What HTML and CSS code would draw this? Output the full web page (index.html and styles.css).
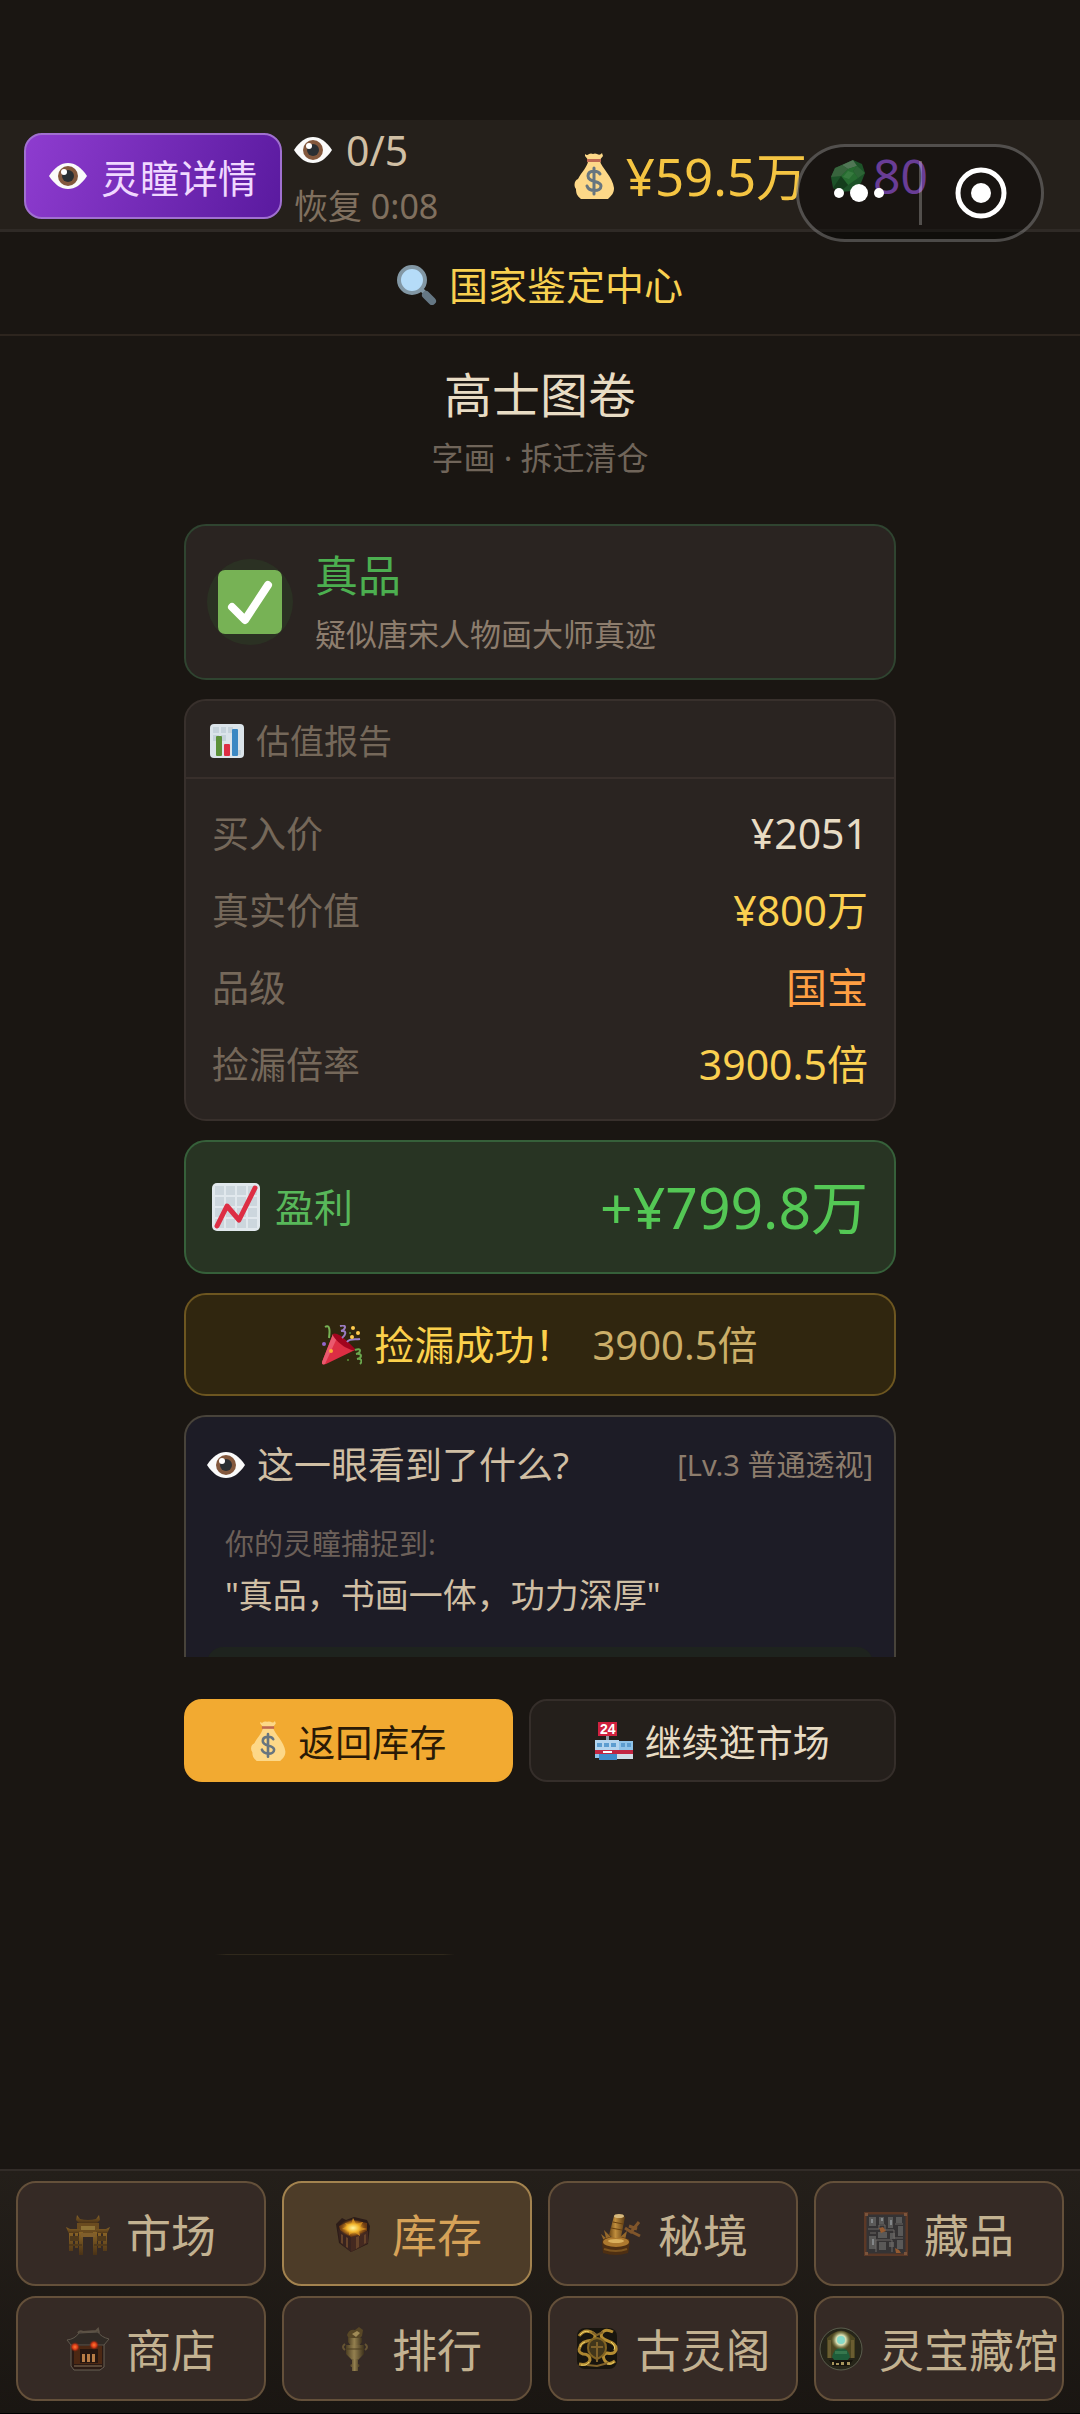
FILE: index.html
```html
<!doctype html>
<html lang="zh-CN">
    <head>
        <meta charset="UTF-8" />
        <meta name="viewport" content="width=device-width, initial-scale=1.0" />
        <title>国家鉴定中心</title>
        <link rel="stylesheet" href="styles.css">
    </head>
    <body>
        <!-- icon sprite -->
        <svg class="sprite" aria-hidden="true">
            <defs>
                <linearGradient id="gold" x1="0" y1="0" x2="0" y2="1">
                    <stop offset="0" stop-color="#8a6426" />
                    <stop offset="1" stop-color="#4a3216" />
                </linearGradient>
                <linearGradient id="bronze" x1="0" y1="0" x2="1" y2="0">
                    <stop offset="0" stop-color="#4c3e22" />
                    <stop offset="0.45" stop-color="#94804f" />
                    <stop offset="1" stop-color="#3f331d" />
                </linearGradient>
                <linearGradient id="brass" x1="0" y1="0" x2="1" y2="0">
                    <stop offset="0" stop-color="#6b4513" />
                    <stop offset="0.4" stop-color="#c08e3d" />
                    <stop offset="1" stop-color="#5c3a12" />
                </linearGradient>
                <radialGradient id="glow">
                    <stop offset="0" stop-color="#fff6a0" />
                    <stop offset="0.45" stop-color="#f3b52c" />
                    <stop offset="1" stop-color="#8a4a12" stop-opacity="0" />
                </radialGradient>
                <radialGradient id="lamp">
                    <stop offset="0" stop-color="#ff7a35" />
                    <stop offset="0.5" stop-color="#d83a16" />
                    <stop offset="1" stop-color="#7a1a08" stop-opacity="0" />
                </radialGradient>
                <radialGradient id="orb">
                    <stop offset="0" stop-color="#8fe6cf" />
                    <stop offset="0.5" stop-color="#d9dfb4" />
                    <stop offset="1" stop-color="#8c8748" stop-opacity="0" />
                </radialGradient>
            </defs>

            <symbol id="i-eye" viewBox="0 0 38 26">
                <path d="M0 13C6 4 12 0 19 0s13 4 19 13c-6 9-12 13-19 13S6 22 0 13z" fill="#fafafa" />
                <circle cx="19" cy="13" r="10" fill="#83583d" />
                <circle cx="19" cy="13" r="6" fill="#2a2f33" />
                <circle cx="15" cy="9" r="3" fill="#fff" />
            </symbol>

            <symbol id="i-search" viewBox="0 0 40 40">
                <path d="M25 25l4 4" stroke="#8196a3" stroke-width="4" />
                <path d="M29 30l6 6" stroke="#657784" stroke-width="8" stroke-linecap="round" />
                <circle cx="15" cy="15" r="13" fill="#b5dcf8" stroke="#8297a4" stroke-width="4" />
            </symbol>

            <symbol id="i-bag" viewBox="0 0 40 46">
                <path d="M11 1q2 2 4 0 2-1 4 0 2-1 4 0 3 2 5-1l1 3-4 5H15l-4-5z" fill="#fdd888" />
                <path d="M14 8h12c1 6 13 16 14 27 0 5-2 7-6 11H7c-4-3-5-6-5-10-3-4-1-9 2-10C7 20 14 13 14 8z" fill="#fdd888" />
                <path d="M13 6h14v3H13z" fill="#bf6952" />
                <path d="M26 21c-2-4-12-4-12 2 0 7 13 4 13 10 0 6-12 6-14 0M20 15v26" fill="none" stroke="#67757f" stroke-width="3" stroke-linecap="round" />
            </symbol>

            <symbol id="i-gem" viewBox="0 0 34 32">
                <path d="M11 5L22 0l9 4 3 9-4 10-9 8-12 1-7-4-2-11 4-9z" fill="#2c7f3e" />
                <path d="M11 5l11-5 4 6-9 3z" fill="#7cb583" />
                <path d="M26 6l8 7-7 5-5-7z" fill="#469a53" />
                <path d="M17 9l9-3-4 5 5 7-10 7-7-9z" fill="#3ba54b" />
                <path d="M10 16l7 9-8 7-7-4z" fill="#205f2c" />
                <path d="M4 8l7-3 6 4-7 7-10 1z" fill="#569a5f" />
                <path d="M12 17l5-6 6 2-5 6z" fill="#68cc72" opacity=".6" />
            </symbol>

            <symbol id="i-check" viewBox="0 0 64 64">
                <rect width="64" height="64" rx="7" fill="#77b255" />
                <path d="M14 37l13 13L50 15" fill="none" stroke="#fff" stroke-width="8" stroke-linecap="round" stroke-linejoin="round" />
            </symbol>

            <symbol id="i-bars" viewBox="0 0 34 34">
                <rect width="34" height="34" rx="4" fill="#dbe4ea" />
                <path d="M3 3h6v6H3zM11 3h5v6h-5zM18 3h5v6h-5zM3 11h6v6H3zM26 26h5v5h-5zM11 11h5v6h-5z" fill="#c6d3db" />
                <rect x="6" y="12" width="6" height="20" rx="1" fill="#5c9139" />
                <rect x="14" y="20" width="6" height="12" rx="1" fill="#dd2e44" />
                <rect x="22" y="5" width="6" height="27" rx="1" fill="#3b88c3" />
            </symbol>

            <symbol id="i-trend" viewBox="0 0 48 48">
                <rect width="48" height="48" rx="5" fill="#e1e8ed" />
                <path d="M3 3h9v9H3zM14 3h9v9h-9zM25 3h9v9h-9zM36 3h9v9h-9zM3 14h9v9H3zM14 14h9v9h-9zM25 14h9v9h-9zM36 14h9v9h-9zM3 25h9v9H3zM14 25h9v9h-9zM25 25h9v9h-9zM36 25h9v9h-9zM3 36h9v9H3zM14 36h9v9h-9zM25 36h9v9h-9zM36 36h9v9h-9z" fill="#ccd6dd" />
                <path d="M5 43l10-20 12 14L43 5" fill="none" stroke="#dd2e44" stroke-width="5" stroke-linecap="round" stroke-linejoin="round" />
            </symbol>

            <symbol id="i-party" viewBox="0 0 40 40">
                <path d="M11 9c4 4 15 15 22 16L4 39c-3 1-4 0-4-2z" fill="#dd2e44" />
                <path d="M11 9l4 4L3 39c-3 1-3 0-3-2z" fill="#ea596e" />
                <path d="M11 9c2-2 8 1 14 7s9 8 8 9-8-1-13-5-10-9-9-11z" fill="#a0041e" />
                <path d="M3 2c5-3 5 4 4 11" fill="none" stroke="#77b255" stroke-width="2" />
                <path d="M18 1c8-2 5 4 1 5 7-1 4 5 1 7" fill="none" stroke="#9b7cc1" stroke-width="2" />
                <path d="M25 17c3-4 8-2 13-3" fill="none" stroke="#9a80cc" stroke-width="2" />
                <path d="M33 25c7-3 6 3 1 4 7-1 6 4 1 5 4-1 6 2 3 5" fill="none" stroke="#6aa74e" stroke-width="2" />
                <circle cx="31" cy="3" r="2" fill="#ffcc4d" />
                <circle cx="36" cy="8" r="2" fill="#ffcc4d" />
                <circle cx="30" cy="12" r="2" fill="#ffcc4d" />
                <circle cx="9" cy="26" r="2" fill="#ffac33" />
                <circle cx="2" cy="19" r="2" fill="#9266cc" />
                <circle cx="28" cy="8" r="1" fill="#5c913b" />
                <circle cx="26" cy="35" r="1" fill="#5c913b" />
            </symbol>

            <symbol id="i-gate" viewBox="0 0 44 44">
                <path d="M14 7q8 2 16 0l3-4 1 5-3 3H13l-3-3 1-5z" fill="url(#gold)" />
                <path d="M11 11h22v10H11z" fill="#6a4b1f" />
                <path d="M15 14h14v4H15z" fill="#8f7336" />
                <path d="M0 15l4 2h10v5H3zM44 15l-4 2H30v5h11z" fill="url(#gold)" />
                <path d="M3 21h4v18H3zM9 21h3v15H9zM13 20h4v23h-4zM27 20h4v23h-4zM32 21h3v15h-3zM37 21h4v18h-4z" fill="url(#gold)" />
                <path d="M4 24h9v5H4zM31 24h9v5h-9zM3 32h13v2H3zM28 32h13v2H28z" fill="#513a1b" />
                <path d="M15 21h14v4H15z" fill="#805e2b" />
            </symbol>

            <symbol id="i-chest" viewBox="0 0 44 44">
                <path d="M4 12l6-6 4 2 8-3 13 3 3 6-2 18-17 8L7 31z" fill="#2c1c18" />
                <path d="M6 17l13 7v16L8 31z" fill="#38231f" />
                <path d="M19 24l17-5v12l-17 9z" fill="#442920" />
                <path d="M9 22l2 1v9l-2-1zM14 25l2 1v10l-2-1zM24 25l3-1v11l-3 2zM32 23l2-1v9l-2 1z" fill="#66432a" />
                <path d="M7 14l13-6 15 3v8l-16 6-11-7z" fill="#6b3a12" />
                <path d="M13 11l6 2 2-7 3 6 7-2-3 5 7 2-8 2 1 5-6-4-5 3v-5l-7-1 5-3z" fill="#d9921f" />
                <ellipse cx="21" cy="16" rx="14" ry="9" fill="url(#glow)" />
            </symbol>

            <symbol id="i-temple" viewBox="0 0 44 44">
                <path d="M5 15h33v25l-4 3H8l-3-4z" fill="#2a1a14" stroke="#686055" stroke-width="1" />
                <path d="M1 13q8-1 12-7l19-1q3 5 11 7l-5 6H5z" fill="#302a25" stroke="#5f574c" stroke-width="1" />
                <path d="M12 6q2-3 5-1l13-1 2-2 1 4" fill="none" stroke="#5c5245" stroke-width="2" />
                <path d="M8 19h28v18H8z" fill="#4c2813" />
                <path d="M14 22h18v14H14z" fill="#261711" />
                <path d="M16 27h3v8h-3zM21 27h3v8h-3zM26 27h3v8h-3z" fill="#b77c46" />
                <path d="M8 38h28v2H8z" fill="#594636" />
                <circle cx="9" cy="20" r="5" fill="url(#lamp)" />
                <circle cx="28" cy="18" r="5" fill="url(#lamp)" />
            </symbol>

            <symbol id="i-censer" viewBox="0 0 44 44">
                <path d="M15 8q2-6 8-5l4-3 4 3-1 6-3 3H17z" fill="#584726" />
                <path d="M20 7l5-3 3 2-4 4z" fill="#a08b57" />
                <path d="M16 11h14v4l-3 4h-8l-3-4z" fill="url(#bronze)" />
                <path d="M14 18h18v9l-6 6h-6l-6-6z" fill="url(#bronze)" />
                <path d="M13 23q-4-3 0-6M33 23q4-3 0-6" fill="none" stroke="#665433" stroke-width="2" />
                <path d="M20 32h6v5l2 1-1 2h-8l-1-2 2-1zM20 40h6v4h-6z" fill="url(#bronze)" />
                <path d="M15 22h16" stroke="#4b3c20" stroke-width="1" />
            </symbol>

            <symbol id="i-bamboo" viewBox="0 0 44 44">
                <path d="M6 29L3 22l5 4-2-8 7 7 3-5 5 6 8-7-2 9 4-1-3 5z" fill="#94672a" />
                <path d="M4 30q0-5 14-5t14 5l-2 11q-12 4-25 0z" fill="#4e2f12" />
                <ellipse cx="18" cy="30" rx="13" ry="5" fill="#ad792e" />
                <ellipse cx="18" cy="29" rx="8" ry="2" fill="#dab05c" />
                <path d="M6 37q12 4 23 0" fill="none" stroke="#7c541f" stroke-width="2" />
                <path d="M16 4q5-3 11 1l-4 20q-6 3-12-2z" fill="url(#brass)" />
                <ellipse cx="21" cy="4" rx="5" ry="2" fill="#d6b87c" />
                <path d="M13 16l11 2M15 10l10 2" stroke="#68400f" stroke-width="1" />
                <path d="M27 16l6 4 8-10M32 19l10 5M31 14l8 3" fill="none" stroke="#80552a" stroke-width="3" />
            </symbol>

            <symbol id="i-relic" viewBox="0 0 44 44">
                <rect x="1" y="1" width="42" height="42" fill="#353334" stroke="#5b3826" stroke-width="3" />
                <path d="M5 5h7v9H5zM15 5h5v7h-5zM24 5h5v11h-5zM32 5h6v6h-6zM5 24h7v13H5zM34 14h5v10h-5zM15 30h7v8h-7zM25 30h5v5h-5zM33 28h6v9h-6zM14 20h9v6h-9zM26 21h5v6h-5z" fill="#5a5958" />
                <path d="M4 17h11v-4h6v5h9v8h9M12 40V28h16v12M31 12h8M6 21h6" fill="none" stroke="#6d6964" stroke-width="1" />
                <path d="M7 7h2v4H7zM17 6h2v3h-2zM26 8h2v5h-2zM8 27h2v6H8z" fill="#848789" />
                <path d="M15 16l4-1 3 4-5 2zM31 36l4 2 2 3h-5z" fill="#955a30" />
                <path d="M1 1h3v3H1zM40 1h3v3h-3zM1 40h3v3H1zM40 40h3v3h-3z" fill="#7c543b" />
            </symbol>

            <symbol id="i-dragon" viewBox="0 0 44 44">
                <rect x="2" y="1" width="40" height="41" rx="8" fill="#18150e" />
                <path d="M4 9q5-7 12-4t2 8q-12 1-13 7-3 5 3 7 7 0 7 6-2 6-11 4" fill="none" stroke="#ac8630" stroke-width="3" />
                <path d="M38 5q-8-4-11 1t6 8q9 3 8 9-2 5-9 3-6 2-2 8 4 5 10 0" fill="none" stroke="#b58d32" stroke-width="3" />
                <path d="M13 21q0-9 9-10 9 1 9 10 0 7-9 11-9-4-9-11z" fill="#41361b" stroke="#816322" stroke-width="2" />
                <path d="M17 5l5 3 6-3M12 38l10 1 11-3M22 15v20M16 20h12" fill="none" stroke="#80622a" stroke-width="2" />
                <path d="M5 8q4-5 9-3M36 15q5 4 3 8M6 38q6 1 8-3M5 20q1-4 5-5M32 37q5 1 7-2" fill="none" stroke="#f0d568" stroke-width="1" />
            </symbol>

            <symbol id="i-museum" viewBox="0 0 44 44">
                <circle cx="22" cy="22" r="21" fill="#262519" stroke="#5a5d4d" stroke-width="1" />
                <path d="M8 11q14-14 28 0v20H8z" fill="#4c4621" />
                <path d="M9 13h3v18H9zM32 13h3v18h-3z" fill="#6a5d31" />
                <path d="M13 30q2-9 9-9t9 9l-3 4H16z" fill="#1e5d3a" />
                <path d="M16 24h12v3H16z" fill="#36774d" />
                <circle cx="22" cy="13" r="10" fill="url(#orb)" />
                <circle cx="22" cy="13" r="4" fill="#87dac8" />
                <path d="M10 33h24l-4 6H14z" fill="#15130c" />
                <path d="M13 35h2v3h-2zM17 36h3v2h-3zM22 35h3v3h-3zM28 35h3v3h-3z" fill="#a5945d" />
            </symbol>
        </svg>

        <header class="topbar">
            <button class="eye-btn" type="button">
                <svg class="icon-eye"><use href="#i-eye" /></svg>灵瞳详情
            </button>
            <div class="energy">
                <div class="energy-count">
                    <svg class="icon-eye"><use href="#i-eye" /></svg>0/5
                </div>
                <div class="energy-timer">恢复 0:08</div>
            </div>
            <div class="money">
                <svg class="icon-bag"><use href="#i-bag" /></svg>¥59.5万
            </div>
            <div class="gems">
                <svg class="icon-gem"><use href="#i-gem" /></svg>80
            </div>
        </header>

        <div class="capsule">
            <button type="button" aria-label="更多">
                <svg viewBox="0 0 50 18" width="50" height="18">
                    <circle cx="5" cy="9" r="5" />
                    <circle cx="25" cy="9" r="9" />
                    <circle cx="45" cy="9" r="5" />
                </svg>
            </button>
            <button type="button" aria-label="关闭">
                <svg viewBox="0 0 52 52" width="52" height="52">
                    <circle cx="26" cy="26" r="23" class="ring" />
                    <circle cx="26" cy="26" r="10" />
                </svg>
            </button>
        </div>

        <div class="page-title">
            <svg class="icon-search"><use href="#i-search" /></svg>国家鉴定中心
        </div>

        <main class="result">
            <div class="item">
                <h1>高士图卷</h1>
                <p>字画 · 拆迁清仓</p>
            </div>

            <section class="card verdict">
                <div class="verdict-icon">
                    <svg><use href="#i-check" /></svg>
                </div>
                <div>
                    <h2>真品</h2>
                    <p>疑似唐宋人物画大师真迹</p>
                </div>
            </section>

            <section class="card report">
                <h3>
                    <svg class="icon-bars"><use href="#i-bars" /></svg>估值报告
                </h3>
                <dl>
                    <div>
                        <dt>买入价</dt>
                        <dd>¥2051</dd>
                    </div>
                    <div>
                        <dt>真实价值</dt>
                        <dd class="gold">¥800万</dd>
                    </div>
                    <div>
                        <dt>品级</dt>
                        <dd class="orange">国宝</dd>
                    </div>
                    <div>
                        <dt>捡漏倍率</dt>
                        <dd class="gold">3900.5倍</dd>
                    </div>
                </dl>
            </section>

            <section class="card profit">
                <div class="profit-label">
                    <svg class="icon-trend"><use href="#i-trend" /></svg>盈利
                </div>
                <div class="profit-value">+¥799.8万</div>
            </section>

            <section class="card bargain">
                <svg class="icon-party"><use href="#i-party" /></svg>
                <span>捡漏成功！</span>
                <span class="bargain-rate">3900.5倍</span>
            </section>

            <section class="card insight">
                <div class="insight-head">
                    <h3>
                        <svg class="icon-eye"><use href="#i-eye" /></svg>这一眼看到了什么?
                    </h3>
                    <span>[Lv.3 普通透视]</span>
                </div>
                <div class="insight-body">
                    <p class="insight-hint">你的灵瞳捕捉到:</p>
                    <p class="insight-quote">"真品，书画一体，功力深厚"</p>
                </div>
                <div class="insight-match"></div>
            </section>
        </main>

        <div class="actions">
            <button class="btn primary" type="button">
                <svg class="icon-bag"><use href="#i-bag" /></svg>返回库存
            </button>
            <button class="btn" type="button">
                <svg class="icon-store" viewBox="0 0 38 38">
                    <path d="M0 19h38v17H0z" fill="#8fc3e9" />
                    <path d="M0 18h24v10H0z" fill="#b4d5ef" />
                    <path d="M2 21h5v4H2zM9 21h5v4H9zM16 21h5v4h-5zM26 21h4v4h-4zM32 21h4v4h-4z" fill="#5c9dd0" />
                    <path d="M0 28h38v4H0z" fill="#c22642" />
                    <path d="M4 32h18v6H4z" fill="#3f8ccb" />
                    <path d="M22 32h16v5H22z" fill="#d0dde6" />
                    <path d="M8 29h9v2H8z" fill="#fff" />
                    <path d="M11 14h3v4h-3z" fill="#8899a6" />
                    <rect x="3" y="0" width="19" height="14" fill="#d0213f" />
                    <text x="5" y="12" class="store-sign">24</text>
                </svg>继续逛市场
            </button>
        </div>
        <div class="divider"></div>

        <nav class="tabbar">
            <a href="#"><svg><use href="#i-gate" /></svg>市场</a>
            <a href="#" class="active"><svg><use href="#i-chest" /></svg>库存</a>
            <a href="#"><svg><use href="#i-bamboo" /></svg>秘境</a>
            <a href="#"><svg><use href="#i-relic" /></svg>藏品</a>
            <a href="#"><svg><use href="#i-temple" /></svg>商店</a>
            <a href="#"><svg><use href="#i-censer" /></svg>排行</a>
            <a href="#"><svg><use href="#i-dragon" /></svg>古灵阁</a>
            <a href="#"><svg><use href="#i-museum" /></svg>灵宝藏馆</a>
        </nav>
    </body>
</html>
```
FILE: styles.css
```css
* {
    box-sizing: border-box;
    margin: 0;
    padding: 0;
}
body {
    font-family: "Noto Sans", "Noto Sans CJK SC", sans-serif;
    background: #1a1612;
    color: #e8dcc4;
    height: 100vh;
    display: flex;
    flex-direction: column;
    padding-top: 120px;
    position: relative;
    overflow: hidden;
    white-space: nowrap;
}
button {
    font-family: inherit;
    color: inherit;
    cursor: pointer;
}
h1,
h2,
h3 {
    font-weight: 400;
}
svg {
    flex: none;
}
.sprite {
    position: absolute;
    width: 0;
    height: 0;
}
.icon-eye {
    width: 38px;
    height: 26px;
}
.icon-search {
    width: 40px;
    height: 40px;
}
.icon-bag {
    width: 40px;
    height: 46px;
}
.icon-gem {
    width: 34px;
    height: 32px;
}
.icon-bars {
    width: 34px;
    height: 34px;
}
.icon-trend {
    width: 48px;
    height: 48px;
}
.icon-party {
    width: 40px;
    height: 40px;
}
.icon-store {
    width: 38px;
    height: 38px;
}
.store-sign {
    font: bold 14px "Liberation Sans", sans-serif;
    fill: #fff;
}

/* top bar */
.topbar {
    display: flex;
    align-items: center;
    background: #25201b;
    border-bottom: 3px solid #2f2a26;
    padding: 3px 152px 0 24px;
}
.eye-btn {
    display: flex;
    align-items: center;
    gap: 14px;
    height: 86px;
    padding: 0 23px;
    background: linear-gradient(110deg, #8e3ccf, #5a1a9f);
    border: 2px solid #a070d0;
    border-radius: 18px;
    color: #f0d8ff;
    font-size: 39px;
}
.energy {
    display: flex;
    flex-direction: column;
    gap: 12px;
    margin: 3px 12px;
}
.energy-count {
    display: flex;
    align-items: center;
    gap: 14px;
    font-size: 41px;
    line-height: 48px;
    color: #d0bfa4;
}
.energy-timer {
    font-size: 34px;
    line-height: 40px;
    color: #80705f;
}
.money,
.gems {
    display: flex;
    align-items: center;
}
.money {
    gap: 12px;
    margin-left: auto;
    font-size: 51px;
    line-height: 64px;
    color: #f5c542;
}
.gems {
    gap: 8px;
    margin-left: 24px;
    font-size: 48px;
    line-height: 64px;
    color: #a25fe6;
}

/* floating capsule over the top bar */
.capsule {
    position: absolute;
    top: 144px;
    right: 36px;
    width: 248px;
    height: 98px;
    display: flex;
    align-items: center;
    border: 3px solid rgba(255, 255, 255, 0.25);
    border-radius: 49px;
    background: rgba(0, 0, 0, 0.35);
}
.capsule button {
    flex: 1;
    height: 64px;
    display: flex;
    align-items: center;
    justify-content: center;
    background: none;
    border: none;
}
.capsule button + button {
    border-left: 3px solid rgba(255, 255, 255, 0.25);
}
.capsule svg {
    fill: #fff;
}
.capsule .ring {
    fill: none;
    stroke: #fff;
    stroke-width: 5;
}

.page-title {
    display: flex;
    align-items: center;
    justify-content: center;
    gap: 12px;
    padding-top: 4px;
    border-bottom: 2px solid #2d251e;
    font-size: 39px;
    line-height: 98px;
    color: #f8d050;
}

/* result list */
.result {
    flex: 1;
    min-height: 0;
    overflow: hidden;
    width: 100%;
    max-width: 712px;
    margin: 0 auto;
    display: flex;
    flex-direction: column;
    gap: 19px;
}
.item {
    text-align: center;
    padding: 26px 0 25px;
}
.item h1 {
    font-size: 48px;
    line-height: 66px;
}
.item p {
    margin-top: 8px;
    font-size: 32px;
    line-height: 44px;
    color: #70655a;
}
.card {
    flex: none;
    background: #2a2421;
    border: 2px solid #38302c;
    border-radius: 22px;
}
.verdict {
    display: flex;
    align-items: center;
    gap: 22px;
    padding: 21px;
    border-color: #2f4430;
}
.verdict-icon {
    display: grid;
    place-items: center;
    width: 86px;
    height: 86px;
    border-radius: 50%;
    background: #2b3123;
}
.verdict-icon svg {
    width: 64px;
    height: 64px;
}
.verdict h2 {
    font-size: 43px;
    line-height: 58px;
    color: #4caf50;
}
.verdict p {
    margin-top: 6px;
    font-size: 31px;
    line-height: 46px;
    color: #8d7d6d;
}
.report h3 {
    display: flex;
    align-items: center;
    gap: 12px;
    padding: 4px 24px 0;
    border-bottom: 2px solid #382f2b;
    font-size: 34px;
    line-height: 72px;
    color: #75685a;
}
.report dl {
    padding: 16px 26px;
}
.report dl div {
    display: flex;
    justify-content: space-between;
    line-height: 77px;
}
.report dt {
    font-size: 37px;
    color: #75685a;
}
.report dd {
    font-size: 41px;
}
.report .gold {
    color: #fbd050;
}
.report .orange {
    color: #ff9f43;
}
.profit {
    display: flex;
    align-items: center;
    justify-content: space-between;
    padding: 0 26px;
    line-height: 130px;
    background: #283423;
    border-color: #36603a;
}
.profit-label {
    display: flex;
    align-items: center;
    gap: 15px;
    font-size: 39px;
    color: #58b85a;
}
.profit-value {
    font-size: 57px;
    color: #54c855;
}
.bargain {
    display: flex;
    align-items: center;
    justify-content: center;
    gap: 12px;
    font-size: 40px;
    line-height: 99px;
    background: #30260f;
    border-color: #6d5620;
    color: #fbd04c;
}
.bargain-rate {
    margin-left: 6px;
    color: #cbae68;
}
.insight {
    padding: 20px 21px;
    background: #1d1c26;
    border-color: #48433a;
}
.insight-head {
    display: flex;
    align-items: center;
    justify-content: space-between;
    font-size: 29px;
    line-height: 56px;
    color: #8d7d6d;
}
.insight-head h3 {
    display: flex;
    align-items: center;
    gap: 12px;
    font-size: 37px;
    color: #d0bfa4;
}
.insight-body {
    padding: 28px 18px 24px;
}
.insight-hint {
    font-size: 29px;
    line-height: 46px;
    color: #6c6059;
}
.insight-quote {
    font-size: 34px;
    line-height: 56px;
    color: #d0bfa4;
}
.insight-match {
    height: 96px;
    border-radius: 16px;
    background: #1e231e;
}

/* buttons */
.actions {
    display: flex;
    gap: 16px;
    width: 100%;
    max-width: 712px;
    margin: 42px auto 0;
}
.btn {
    flex: 1 1 auto;
    display: flex;
    align-items: center;
    justify-content: center;
    gap: 12px;
    height: 83px;
    background: #241f1b;
    border: 2px solid #352e2a;
    border-radius: 18px;
    font-size: 37px;
}
.btn.primary {
    background: #f2aa31;
    border-color: #f2aa31;
    color: #2a1a06;
}
.btn .icon-bag {
    width: 36px;
    height: 40px;
}
.divider {
    flex: none;
    width: 240px;
    height: 1px;
    margin: 172px 0 214px 215px;
    background: linear-gradient(90deg, transparent, #30291c 5%, #30291c 95%, transparent);
}

/* bottom navigation */
.tabbar {
    display: grid;
    grid-template-columns: repeat(4, minmax(0, 1fr));
    gap: 10px 16px;
    padding: 10px 16px 12px;
    border-top: 2px solid #322c28;
    border-bottom: 1px solid #000;
    background: linear-gradient(#241f1a, #1a1612);
}
.tabbar a {
    display: flex;
    align-items: center;
    justify-content: center;
    gap: 16px;
    height: 105px;
    background: #352a25;
    border: 2px solid #64503a;
    border-radius: 20px;
    font-size: 45px;
    color: #c3b291;
    text-decoration: none;
}
.tabbar svg {
    width: 44px;
    height: 44px;
}
.tabbar .active {
    background: #4d3c28;
    border-color: #a3834f;
    color: #d6a258;
}
```
